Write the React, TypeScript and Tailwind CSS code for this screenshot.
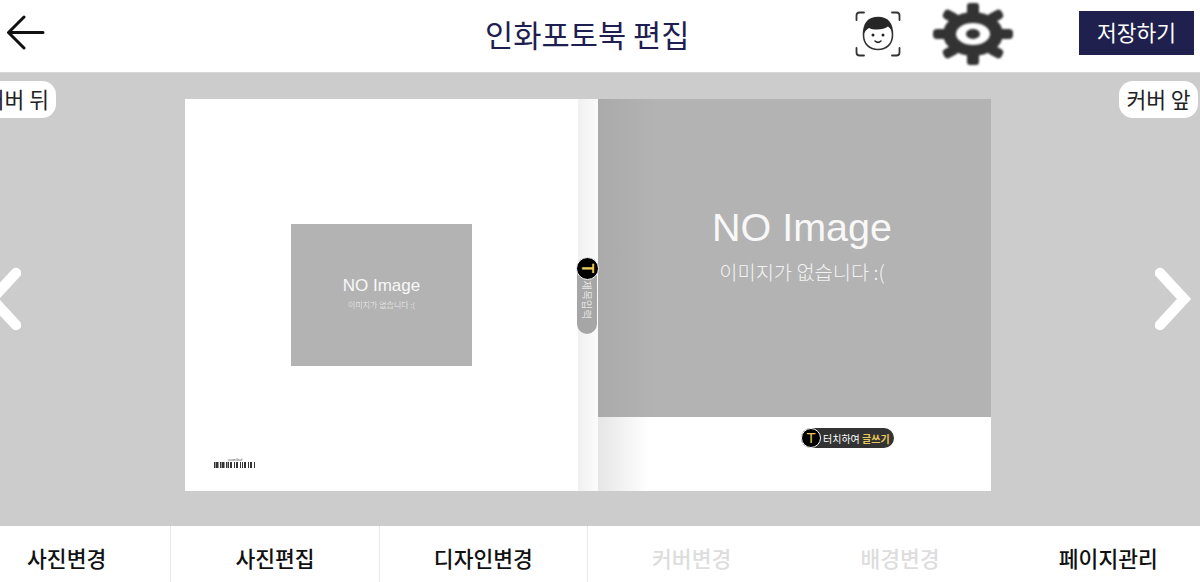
import React from 'react';

const KR = "font-['Noto_Sans_CJK_KR','Liberation_Sans',sans-serif]";

const BackArrow = () => (
    <svg width="40" height="38" viewBox="0 0 40 38" fill="none" stroke="#111" strokeWidth="3" strokeLinecap="round" strokeLinejoin="round">
        <path d="M37 17.500H2.500M18 2 2.500 17.500 18 33" />
    </svg>
);

const FaceIcon = () => (
    <svg width="46" height="46" viewBox="0 0 46 46" fill="none">
        <path d="M1.500 9V4.500Q1.500 1.500 4.500 1.500H9M37 1.500h4.500Q44.500 1.500 44.500 4.500V9M44.500 37v4.500Q44.500 44.500 41.500 44.500H37M9 44.500H4.500Q1.500 44.500 1.500 41.500V37" stroke="#333" strokeWidth="1.800" strokeLinecap="round" />
        <path d="M8.500 24C8.500 12 14 6.500 23 6.500S37.500 12 37.500 24c0 9-6 14.500-14.500 14.500S8.500 33 8.500 24Z" fill="#fff" stroke="#333" strokeWidth="1.600" />
        <path d="M8.500 24C8.500 12 14 6.500 23 6.500S37.500 12 37.500 24c-.5-4-2-7-4.500-8.500C29 19 19 19.500 14 17c-2.500 1.500-4.500 3.500-5.500 7Z" fill="#262626" />
        <circle cx="18" cy="24" r="1.500" fill="#222" />
        <circle cx="28" cy="24" r="1.500" fill="#222" />
        <path d="M20 30q3 2.800 6 0" stroke="#222" strokeWidth="1.500" strokeLinecap="round" />
    </svg>
);

const Gear = () => (
    <svg width="80" height="62" viewBox="0 0 80 62" className="blur-[1px]">
        <g fill="#333">
            <ellipse cx="40" cy="31" rx="30" ry="22" />
            <rect x="34" y="0" width="12" height="14" rx="3" />
            <rect x="34" y="48" width="12" height="14" rx="3" />
            <rect x="0" y="26" width="16" height="10" rx="4" />
            <rect x="64" y="26" width="16" height="10" rx="4" />
            <rect x="10" y="8" width="15" height="10" rx="4" transform="rotate(28 17 13)" />
            <rect x="55" y="8" width="15" height="10" rx="4" transform="rotate(-28 63 13)" />
            <rect x="10" y="44" width="15" height="10" rx="4" transform="rotate(-28 17 49)" />
            <rect x="55" y="44" width="15" height="10" rx="4" transform="rotate(28 63 49)" />
        </g>
        <ellipse cx="40" cy="31" rx="17" ry="11" fill="#fff" />
        <ellipse cx="40" cy="31" rx="7" ry="5" fill="#333" />
    </svg>
);

const Barcode = () => (
    <svg width="42" height="6" viewBox="0 0 42 6" className="blur-[0.3px]">
        {[0, 2, 3, 6, 8, 9, 12, 14, 16, 17, 20, 22, 23, 26, 28, 30, 31, 34, 36, 37, 40].map((x) => (
            <rect key={x} x={x} y="0" width={x % 3 === 0 ? 1.500 : 1} height="6" fill="#333" />
        ))}
    </svg>
);

const NoImage = ({ big }: { big?: boolean }) => (
    <div className="flex flex-col items-center text-white">
        <span className={big ? "font-['Liberation_Sans',sans-serif] text-[39.500px] leading-[46px] text-[#f8f8f8]" : "font-['Liberation_Sans',sans-serif] text-[17px] leading-[22px] text-[#f8f8f8]"}>
            NO Image
        </span>
        <span className={big ? `${KR} mt-[9px] text-[19.800px] leading-[26px] font-light text-[#f2f2f2]` : `${KR} mt-[2px] text-[8px] leading-[12px] font-light text-[#f2f2f2]`}>
            이미지가 없습니다 :(
        </span>
    </div>
);

const Chevron = ({ d }: { d: string }) => (
    <svg width="40" height="66" viewBox="0 0 40 66" fill="none" stroke="#fff" strokeWidth="10.500" strokeLinecap="round" strokeLinejoin="miter">
        <path d={d} />
    </svg>
);

const tabs = [
    { label: "사진변경", off: false, line: true },
    { label: "사진편집", off: false, line: true },
    { label: "디자인변경", off: false, line: true },
    { label: "커버변경", off: true, line: false },
    { label: "배경변경", off: true, line: false },
    { label: "페이지관리", off: false, line: false },
];

export default function App() {
    return (
        <div className={`${KR} flex h-[582px] w-[1200px] flex-col overflow-hidden bg-white`}>
            {/* 상단 */}
            <header className="flex h-[72px] shrink-0 items-center">
                <div className="ml-[6px] mt-[-5px] flex w-[40px]">
                    <BackArrow />
                </div>
                <h1 className="ml-[439px] mt-[-5px] w-[204px] whitespace-nowrap text-center text-[30.700px] leading-[40px] text-[#1e1e50]">
                    인화포토북 편집
                </h1>
                <div className="ml-[166px] mt-[-5px]">
                    <FaceIcon />
                </div>
                <div className="ml-[32px] mt-[-5px]">
                    <Gear />
                </div>
                <button className="ml-[66px] mt-[-7px] h-[44px] w-[115px] whitespace-nowrap bg-[#20204f] text-[21.500px] text-white">
                    저장하기
                </button>
            </header>

            {/* 편집 영역 */}
            <main className="relative flex h-[454px] shrink-0 border-t border-[#d8d8d8] bg-[#cccccc] pl-[185px] pt-[26px]">
                <div className="absolute left-[-22px] top-[8px] flex h-[37px] w-[78px] items-center justify-end whitespace-nowrap rounded-[14px] bg-white pr-[7px] text-[21.500px] text-[#222]">
                    커버 뒤
                </div>
                <div className="absolute left-[1119px] top-[8px] flex h-[37px] w-[79px] items-center justify-center whitespace-nowrap rounded-[14px] bg-white text-[21.500px] text-[#222]">
                    커버 앞
                </div>
                <div className="absolute left-[-19px] top-[193px]">
                    <Chevron d="M35 7 11 33l24 26" />
                </div>
                <div className="absolute left-[1155px] top-[193px]">
                    <Chevron d="M5 7l24 26L5 59" />
                </div>

                <div className="relative flex h-[392px] w-[806px] bg-white">
                    <div className="flex w-[393px] shrink-0 flex-col">
                        <div className="ml-[106px] mt-[125px] flex h-[142px] w-[181px] flex-col items-center justify-center bg-[#b3b3b3] pb-[5px]">
                            <NoImage />
                        </div>
                        <div className="ml-[29px] mt-[93px] flex w-[42px] flex-col items-center">
                            <span className="font-['Liberation_Sans',sans-serif] text-[3px] leading-[3px] text-[#555]">
                                jsoamilbud
                            </span>
                            <Barcode />
                        </div>
                    </div>
                    <div className="w-[20px] shrink-0 bg-gradient-to-r from-[#f0f0f0] to-[#fbfbfb]" />
                    <div className="flex w-[393px] shrink-0 flex-col">
                        <div className="flex h-[318px] flex-col items-center justify-center bg-gradient-to-r from-[#aaaaaa] to-[#b3b3b3] to-[15%] pb-[27px] pl-[15px]">
                            <NoImage big />
                        </div>
                        <div className="flex flex-1 justify-start bg-gradient-to-r from-[#e6e6e6] to-white to-[13%] pl-[203px] pt-[11px]">
                            <div className="flex h-[20px] w-[93px] items-center rounded-full bg-[#333333]">
                                <span className="flex h-[20px] w-[20px] items-center justify-center rounded-full border border-white bg-black font-['Liberation_Sans',sans-serif] text-[15px] text-[#e8c95a]">
                                    T
                                </span>
                                <span className="ml-[2px] whitespace-nowrap text-[10px] text-white">
                                    터치하여 <span className="font-bold text-[#e8c95a]">글쓰기</span>
                                </span>
                            </div>
                        </div>
                    </div>

                    {/* 책등 제목 입력 */}
                    <div className="absolute left-[392px] top-[171px] flex h-[64px] w-[20px] items-center justify-center rounded-b-full bg-[#a6a6a6] pb-[7px] pt-[3px]">
                        <span className="rotate-90 whitespace-nowrap text-[10.500px] text-[#e8e8e8]">제목입력</span>
                    </div>
                    <div className="absolute left-[391px] top-[158px] flex h-[23px] w-[23px] rotate-90 items-center justify-center rounded-full border border-white bg-black font-['Liberation_Sans',sans-serif] text-[16px] font-bold text-[#e8c95a]">
                        T
                    </div>
                </div>
            </main>

            {/* 하단 메뉴 */}
            <nav className="ml-[-37px] flex h-[56px] w-[1250px] shrink-0">
                {tabs.map((tab) => (
                    <div
                        key={tab.label}
                        className={`flex w-[208.500px] items-center justify-center whitespace-nowrap border-r pt-[9px] text-[21.500px] font-medium ${
                            tab.line ? "border-[#e8e8e8]" : "border-transparent"
                        } ${tab.off ? "text-[#dddddd]" : "text-[#111111]"}`}
                    >
                        {tab.label}
                    </div>
                ))}
            </nav>
        </div>
    );
}
